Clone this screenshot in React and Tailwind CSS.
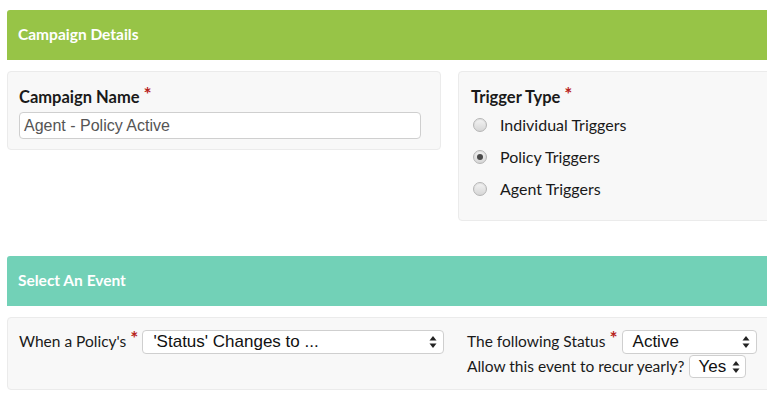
import React from "react";

const Star = () => <span className="text-[#b8231b] text-[19px] font-bold leading-none relative -top-[4px] ml-[4px]">*</span>;

const Arrows = () => (
  <svg width="8" height="14" viewBox="0 0 8 14" className="shrink-0">
    <path d="M4 1 L7.5 5.5 H0.5 Z" fill="#222" />
    <path d="M4 13 L7.5 8.5 H0.5 Z" fill="#222" />
  </svg>
);

const Radio = ({ checked }) => (
  <span className="w-[14px] h-[14px] rounded-full border border-[#b5b5b5] bg-gradient-to-b from-[#f4f4f4] to-[#d6d6d6] flex items-center justify-center shrink-0 shadow-[inset_0_1px_1px_rgba(0,0,0,0.08)]">
    {checked && <span className="w-[6px] h-[6px] rounded-full bg-[#4a4a4a]" />}
  </span>
);

const sysFont = { fontFamily: "'Liberation Sans', Arial, sans-serif" };

export default function App() {
  return (
    <div className="w-[767px] h-[400px] overflow-hidden bg-white" style={{ fontFamily: "Lato, 'Open Sans', sans-serif" }}>
      <div className="w-[900px] pl-[7px] pt-[10px]">
        <div className="h-[50px] bg-[#97c447] flex items-center pl-[11px] text-white font-bold text-[15.5px] rounded-tl-[3px]">
          Campaign Details
        </div>
        <div className="flex gap-[17px] mt-[11px] items-start">
          <div className="w-[434px] h-[79px] bg-[#f8f8f8] border border-[#ebebeb] rounded-[4px] px-[11px] pt-[14px]">
            <div className="flex items-center font-bold text-[16.5px] text-[#1a1a1a] h-[22px]">Campaign Name<Star /></div>
            <div className="mt-[4px] w-[402px] h-[27px] bg-white border border-[#cfcfcf] rounded-[4px] flex items-center pl-[4px] text-[#555] text-[16px]" style={sysFont}>
              Agent - Policy Active
            </div>
          </div>
          <div className="w-[434px] h-[150px] bg-[#f8f8f8] border border-[#ebebeb] rounded-[4px] pl-[12px] pt-[14px]">
            <div className="flex items-center font-bold text-[16.5px] text-[#1a1a1a] h-[22px]">Trigger Type<Star /></div>
            <div className="flex flex-col mt-[1px]">
              {[["Individual Triggers", false], ["Policy Triggers", true], ["Agent Triggers", false]].map(([l, c]) => (
                <div key={l} className="flex items-center h-[32px] pl-[2px]">
                  <Radio checked={c} />
                  <span className="ml-[13px] text-[16px] text-[#1a1a1a]">{l}</span>
                </div>
              ))}
            </div>
          </div>
        </div>
        <div className="h-[50px] bg-[#72d1b7] flex items-center pl-[11px] text-white font-bold text-[15.5px] mt-[35px] rounded-tl-[3px]">
          Select An Event
        </div>
        <div className="mt-[11px] h-[73px] bg-[#f8f8f8] border border-[#ebebeb] rounded-[4px] pl-[11px] pt-[12px] flex">
          <div className="w-[448px] flex items-start">
            <div className="flex items-center h-[23px] text-[15.5px] text-[#1a1a1a]">When a Policy's<Star /></div>
            <div className="ml-[4px] w-[302px] h-[24px] bg-white border border-[#cfcfcf] rounded-[4px] flex items-center justify-between pl-[10px] pr-[6px] text-[17px] text-[#111]" style={sysFont}>
              <span>'Status' Changes to ...</span>
              <Arrows />
            </div>
          </div>
          <div className="flex flex-col">
            <div className="flex items-start">
              <div className="flex items-center h-[23px] text-[15.5px] text-[#1a1a1a]">The following Status<Star /></div>
              <div className="ml-[4px] w-[135px] h-[24px] bg-white border border-[#cfcfcf] rounded-[4px] flex items-center justify-between pl-[10px] pr-[6px] text-[17px] text-[#111]" style={sysFont}>
                <span>Active</span>
                <Arrows />
              </div>
            </div>
            <div className="flex items-start mt-[1px]">
              <div className="flex items-center h-[23px] text-[15.5px] text-[#1a1a1a]">Allow this event to recur yearly?</div>
              <div className="ml-[4px] w-[57px] h-[23px] bg-white border border-[#cfcfcf] rounded-[4px] flex items-center justify-between pl-[9px] pr-[5px] text-[17px] text-[#111]" style={sysFont}>
                <span>Yes</span>
                <Arrows />
              </div>
            </div>
          </div>
        </div>
      </div>
    </div>
  );
}
